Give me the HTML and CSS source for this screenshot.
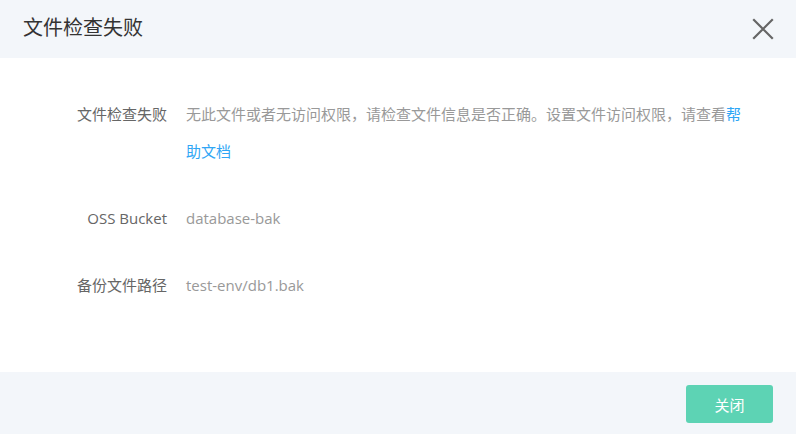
FILE: index.html
```html
<!DOCTYPE html>
<html lang="zh-CN">
<head>
<meta charset="utf-8">
<title>文件检查失败</title>
<link rel="stylesheet" href="styles.css">
</head>
<body>
<div class="dialog">
  <div class="dialog-header">
    <h1 class="dialog-title">文件检查失败</h1>
    <button class="dialog-close" aria-label="关闭">
      <svg width="22" height="22" viewBox="0 0 22 22"><path d="M2 2 L20 20 M20 2 L2 20" stroke="#666" stroke-width="2.2" fill="none" stroke-linecap="square"/></svg>
    </button>
  </div>
  <div class="dialog-body">
    <div class="row">
      <div class="label">文件检查失败</div>
      <div class="value">无此文件或者无访问权限，请检查文件信息是否正确。设置文件访问权限，请查看<a class="link" href="#">帮助文档</a></div>
    </div>
    <div class="row">
      <div class="label">OSS Bucket</div>
      <div class="value">database-bak</div>
    </div>
    <div class="row">
      <div class="label">备份文件路径</div>
      <div class="value">test-env/db1.bak</div>
    </div>
  </div>
  <div class="dialog-footer">
    <button class="btn-primary">关闭</button>
  </div>
</div>
</body>
</html>
```

FILE: styles.css
```css
html, body {
  margin: 0;
  padding: 0;
  background: #fff;
}
body {
  font-family: "Open Sans", "Noto Sans CJK SC", sans-serif;
}
.dialog {
  width: 796px;
  height: 434px;
  display: flex;
  flex-direction: column;
  background: #fff;
}
.dialog-header {
  height: 58px;
  background: #f3f6fa;
  display: flex;
  align-items: center;
  justify-content: space-between;
  padding: 0 22px 0 23px;
  box-sizing: border-box;
}
.dialog-title {
  margin: 0;
  font-family: "Noto Sans CJK SC", sans-serif;
  font-weight: 400;
  font-size: 20px;
  color: #333;
  line-height: 28px;
  margin-top: -4px;
}
.dialog-close {
  border: 0;
  background: transparent;
  padding: 0;
  width: 22px;
  height: 22px;
  display: flex;
  margin-top: -1px;
}
.dialog-body {
  flex: 1;
  padding: 38px 44px 0 67px;
  display: flex;
  flex-direction: column;
  gap: 30px;
  font-size: 15px;
}
.row {
  display: flex;
  gap: 19px;
  line-height: 37px;
}
.label {
  width: 100px;
  flex: none;
  text-align: right;
  color: #666;
  white-space: nowrap;
}
.value {
  flex: 1;
  color: #999;
}
.link {
  color: #2fa6f5;
  text-decoration: none;
}
.dialog-footer {
  height: 62px;
  background: #f3f6fa;
  display: flex;
  justify-content: flex-end;
  align-items: flex-start;
  padding: 13px 23px 0 0;
  box-sizing: border-box;
}
.btn-primary {
  width: 87px;
  height: 38px;
  border: 0;
  border-radius: 3px;
  background: #5dd3b4;
  color: #fff;
  font-family: "Noto Sans CJK SC", sans-serif;
  font-size: 15px;
}
```
